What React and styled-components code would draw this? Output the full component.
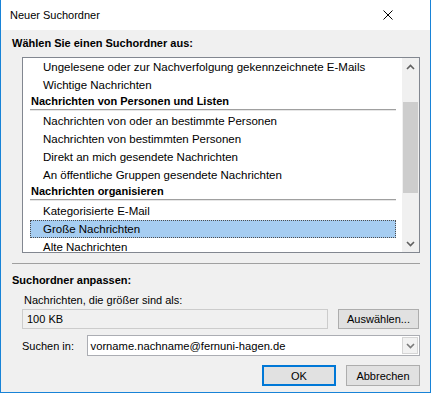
import React from "react";
import styled, { createGlobalStyle } from "styled-components";

const Global = createGlobalStyle`
  html, body {
    margin: 0;
    background: #ffffff;
    font-family: "Liberation Sans", Arial, sans-serif;
    font-size: 11px;
    color: #000;
  }
  * { box-sizing: border-box; }
`;

const Window = styled.div`
  width: 431px;
  height: 393px;
  display: flex;
  flex-direction: column;
  border: 1px solid #1883d7;
  border-top: none;
  background: #f0f0f0;
`;

const TitleBar = styled.div`
  height: 30px;
  flex: none;
  display: flex;
  align-items: center;
  justify-content: space-between;
  padding: 0 37px 0 9px;
  background: #ffffff;
  font-size: 11px;
`;

const Body = styled.div`
  flex: 1;
  display: flex;
  flex-direction: column;
  padding: 0 10px 0 11px;
`;

const GroupLabel = styled.div`
  margin-top: ${p => p.top}px;
  line-height: 16px;
  font-weight: bold;
`;

const ListBox = styled.div`
  margin: 6px 0 0 10px;
  width: 398px;
  height: 196px;
  border: 1px solid #828790;
  background: #ffffff;
  display: flex;
  overflow: hidden;
`;

const ListContent = styled.div`
  flex: 1;
`;

const Row = styled.div`
  margin-left: 7px;
  width: 366px;
  height: 18px;
  line-height: 16px;
  padding-left: 12px;
  font-size: 11.5px;
  white-space: nowrap;
  border: 1px solid ${p => (p.selected ? "#4d4d4d" : "transparent")};
  border-style: ${p => (p.selected ? "dotted" : "solid")};
  background: ${p => (p.selected ? "#a6cdf1" : "transparent")};
`;

const Header = styled.div`
  margin-left: 7px;
  width: 366px;
  height: 18px;
  padding-bottom: 1px;
  display: flex;
  flex-direction: column;
`;

const HeaderText = styled.div`
  line-height: 14px;
  padding-left: 1px;
  font-weight: bold;
  margin-bottom: 1px;
`;

const HeaderRule = styled.div`
  height: 2px;
  border-top: 1px solid #a0a0a0;
  border-bottom: 1px solid #e6e6e6;
`;

const ScrollBar = styled.div`
  width: 17px;
  flex: none;
  background: #f0f0f0;
  display: flex;
  flex-direction: column;
`;

const ScrollArrow = styled.div`
  height: 17px;
  display: flex;
  align-items: center;
  justify-content: center;
`;

const ScrollTrack = styled.div`
  flex: 1;
`;

const Thumb = styled.div`
  margin: 27px 1px 0 1px;
  height: 91px;
  background: #cdcdcd;
`;

const Separator = styled.div`
  margin-top: 10px;
  width: 408px;
  height: 1px;
  background: #a0a0a0;
`;

const Caption = styled.div`
  margin: 4px 0 0 12px;
  line-height: 16px;
`;

const FieldRow = styled.div`
  margin: ${p => p.top}px 0 0 10px;
  display: flex;
  align-items: center;
  gap: 10px;
`;

const TextField = styled.div`
  width: 306px;
  height: 20px;
  border: 1px solid #cccccc;
  background: #f0f0f0;
  padding-left: 4px;
  line-height: 18px;
`;

const Button = styled.div`
  width: ${p => p.w}px;
  height: ${p => p.h}px;
  border: ${p => (p.primary ? "2px solid #0078d7" : "1px solid #adadad")};
  background: #e1e1e1;
  display: flex;
  align-items: center;
  justify-content: center;
`;

const SearchLabel = styled.div`
  width: 56px;
  line-height: 16px;
`;

const Combo = styled.div`
  width: 342px;
  height: 21px;
  border: 1px solid #abadb3;
  background: #ffffff;
  display: flex;
  align-items: center;
  padding: 0 1px 0 3px;
`;

const ComboText = styled.div`
  flex: 1;
  font-size: 11.2px;
`;

const ComboButton = styled.div`
  width: 16px;
  height: 17px;
  border: 1px solid #d5d5d5;
  background: #f2f2f2;
  display: flex;
  align-items: center;
  justify-content: center;
`;

const ButtonRow = styled.div`
  margin-top: 9px;
  display: flex;
  justify-content: flex-end;
  gap: 10px;
`;

const Chevron = ({ up, color = "#606060" }) => (
  <svg width="9" height="6" viewBox="0 0 9 6">
    <polyline
      points={up ? "1,5 4.5,1.5 8,5" : "1,1 4.5,4.5 8,1"}
      fill="none"
      stroke={color}
      strokeWidth="1.6"
    />
  </svg>
);

const CloseIcon = () => (
  <svg width="10" height="10" viewBox="0 0 10 10">
    <path d="M0.5 0.5 L9.5 9.5 M9.5 0.5 L0.5 9.5" stroke="#000" strokeWidth="1" />
  </svg>
);

const items = [
  { text: "Ungelesene oder zur Nachverfolgung gekennzeichnete E-Mails" },
  { text: "Wichtige Nachrichten" },
  { text: "Nachrichten von Personen und Listen", header: true },
  { text: "Nachrichten von oder an bestimmte Personen" },
  { text: "Nachrichten von bestimmten Personen" },
  { text: "Direkt an mich gesendete Nachrichten" },
  { text: "An öffentliche Gruppen gesendete Nachrichten" },
  { text: "Nachrichten organisieren", header: true },
  { text: "Kategorisierte E-Mail" },
  { text: "Große Nachrichten", selected: true },
  { text: "Alte Nachrichten" },
];

const App = () => (
  <>
    <Global />
    <Window>
      <TitleBar>
        <span>Neuer Suchordner</span>
        <CloseIcon />
      </TitleBar>
      <Body>
        <GroupLabel top={5}>Wählen Sie einen Suchordner aus:</GroupLabel>
        <ListBox>
          <ListContent>
            {items.map(item =>
              item.header ? (
                <Header key={item.text}>
                  <HeaderText>{item.text}</HeaderText>
                  <HeaderRule />
                </Header>
              ) : (
                <Row key={item.text} selected={item.selected}>
                  {item.text}
                </Row>
              )
            )}
          </ListContent>
          <ScrollBar>
            <ScrollArrow><Chevron up /></ScrollArrow>
            <ScrollTrack><Thumb /></ScrollTrack>
            <ScrollArrow><Chevron /></ScrollArrow>
          </ScrollBar>
        </ListBox>
        <Separator />
        <GroupLabel top={8}>Suchordner anpassen:</GroupLabel>
        <Caption>Nachrichten, die größer sind als:</Caption>
        <FieldRow top={1}>
          <TextField>100 KB</TextField>
          <Button w={81} h={20}>Auswählen...</Button>
        </FieldRow>
        <FieldRow top={6}>
          <SearchLabel>Suchen in:</SearchLabel>
          <Combo>
            <ComboText>vorname.nachname@fernuni-hagen.de</ComboText>
            <ComboButton><Chevron color="#7a7a7a" /></ComboButton>
          </Combo>
        </FieldRow>
        <ButtonRow>
          <Button primary w={74} h={21}>OK</Button>
          <Button w={74} h={21}>Abbrechen</Button>
        </ButtonRow>
      </Body>
    </Window>
  </>
);

export default App;
